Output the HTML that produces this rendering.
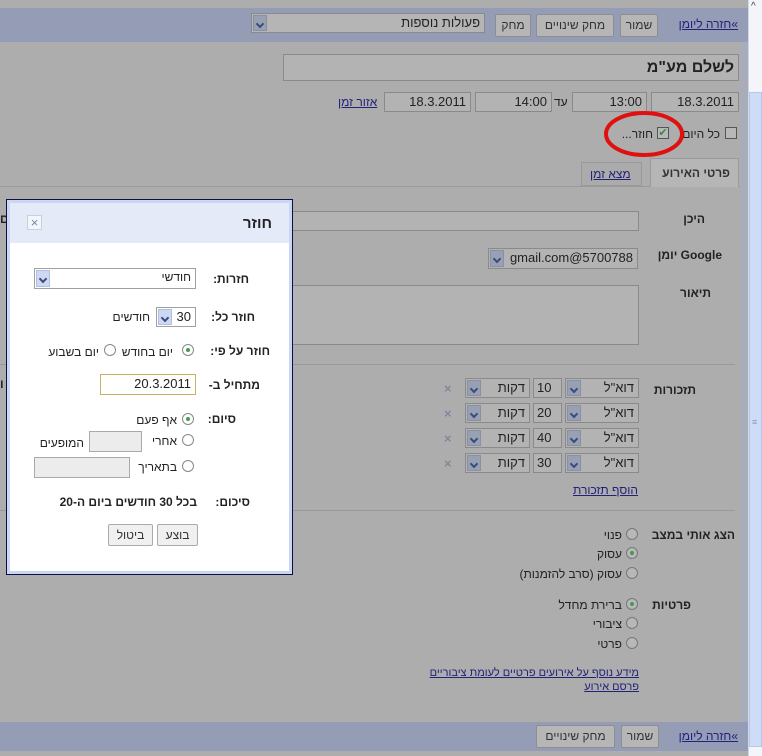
<!DOCTYPE html>
<html><head><meta charset="utf-8">
<style>
*{margin:0;padding:0;box-sizing:border-box}
body{width:762px;height:756px;background:#adadad;position:relative;overflow:hidden;font-family:"Liberation Sans","Noto Sans CJK SC",sans-serif;font-size:12px;color:#222}
.a{position:absolute}
.t{position:absolute;white-space:nowrap;direction:rtl;line-height:14px}
.b{font-weight:bold}
.lnk{color:#22227a;text-decoration:underline}
.btn{position:absolute;background:#b6b6b6;border:1px solid #8e8e8e;text-align:center;line-height:20px;color:#333;border-radius:2px}
.inp{position:absolute;background:#b3b3b3;border:1px solid #8a8a8a;text-align:right;padding-right:4px;color:#222;font-size:13px;line-height:17px}
.arr{position:absolute;background:#98a0b4;border:1px solid #8a90a4;width:14px}
.arr:after{content:"";position:absolute;left:3px;top:5px;width:4px;height:4px;border-right:2px solid #3a4a7a;border-bottom:2px solid #3a4a7a;transform:rotate(45deg)}
.rad{position:absolute;width:12px;height:12px;border-radius:50%;border:1px solid #777;background:#b8b8b8}
.rad.on:after{content:"";position:absolute;left:3px;top:3px;width:4px;height:4px;border-radius:50%;background:#4a9a4a}
.x{position:absolute;color:#8088a0;font-weight:bold;font-size:13px}
.d .rad{background:#fff;border-color:#888}
.d .inp{background:#fff;border-color:#a0a0a0}
.d .arr{background:#cdd9f3;border-color:#b0c0e0}
.d .btn{background:#f0f0f0;border-color:#aaa}
</style></head><body>
<div class="a" style="left:748px;top:0;width:14px;height:756px;background:#f3f5fb;border-left:1px solid #d0d8e8"></div>
<div class="a" style="left:749px;top:92px;width:13px;height:655px;background:#cfdcf7;border:1px solid #b6c7ea"></div>
<div class="t" style="left:751px;top:0;font-size:10px;color:#444">^</div>
<div class="t" style="left:752px;top:415px;font-size:9px;color:#8899bb">≡</div>
<div class="a" style="left:740px;top:42px;width:8px;height:680px;background:#a9adba"></div>

<div class="a" style="left:0;top:8px;width:748px;height:34px;background:#959cb5"></div>
<div class="t lnk" style="right:24px;top:17px">»חזרה ליומן</div>
<div class="btn" style="left:620px;top:14px;width:38px;height:23px">שמור</div>
<div class="btn" style="left:536px;top:14px;width:78px;height:23px">מחק שינויים</div>
<div class="btn" style="left:495px;top:14px;width:36px;height:23px">מחק</div>
<div class="inp" style="left:251px;top:13px;width:234px;height:20px;background:#b5b5b5">פעולות נוספות</div>
<div class="arr" style="left:253px;top:15px;height:16px"></div>

<div class="inp b" style="left:283px;top:54px;width:456px;height:27px;font-size:16px;line-height:25px">לשלם מע"מ</div>
<div class="inp" style="left:651px;top:92px;width:88px;height:20px">18.3.2011</div>
<div class="inp" style="left:572px;top:92px;width:75px;height:20px">13:00</div>
<div class="t" style="left:554px;top:95px">עד</div>
<div class="inp" style="left:475px;top:92px;width:77px;height:20px">14:00</div>
<div class="inp" style="left:384px;top:92px;width:87px;height:20px">18.3.2011</div>
<div class="t lnk" style="left:338px;top:95px">אזור זמן</div>

<div class="a" style="left:725px;top:127px;width:12px;height:12px;border:1px solid #555;background:#b8b8b8"></div>
<div class="t" style="right:42px;top:127px">כל היום</div>
<div class="a" style="left:657px;top:127px;width:12px;height:12px;border:1px solid #555;background:#b8b8b8;color:#3a8a3a;font-size:11px;line-height:10px;text-align:center">✔</div>
<div class="t" style="right:109px;top:127px">חוזר...</div>
<svg class="a" style="left:600px;top:110px" width="90" height="50"><ellipse cx="44" cy="24" rx="38" ry="21" fill="none" stroke="#e01010" stroke-width="4"/></svg>

<div class="a" style="left:0;top:186px;width:740px;height:1px;background:#9a9a9a"></div>
<div class="a" style="left:650px;top:158px;width:89px;height:29px;background:#b6b6b6;border:1px solid #9a9a9a;border-bottom:none"></div>
<div class="t b" style="right:32px;top:166px;color:#333">פרטי האירוע</div>
<div class="a" style="left:581px;top:162px;width:61px;height:24px;background:#ababab;border:1px solid #999"></div>
<div class="t lnk" style="left:590px;top:167px">מצא זמן</div>

<div class="t b" style="right:57px;top:212px">היכן</div>
<div class="t b" style="left:0;top:212px">ם</div>
<div class="inp" style="left:290px;top:211px;width:349px;height:20px"></div>
<div class="t b" style="right:40px;top:248px">Google יומן</div>
<div class="inp" style="left:488px;top:248px;width:150px;height:21px">gmail.com@5700788</div>
<div class="arr" style="left:490px;top:250px;height:17px"></div>
<div class="t b" style="right:51px;top:286px">תיאור</div>
<div class="inp" style="left:290px;top:285px;width:349px;height:60px"></div>
<div class="a" style="left:0;top:364px;width:735px;height:1px;background:#999"></div>

<div class="t b" style="right:66px;top:383px">תזכורות</div>
<div class="t b" style="left:0;top:377px">ו</div>
<div class="inp" style="left:565px;top:378px;width:74px;height:20px">דוא"ל</div><div class="arr" style="left:567px;top:380px;height:16px"></div>
<div class="inp" style="left:533px;top:378px;width:29px;height:20px;text-align:left;padding-left:3px">10</div>
<div class="inp" style="left:465px;top:378px;width:65px;height:20px">דקות</div><div class="arr" style="left:467px;top:380px;height:16px"></div>
<div class="x" style="left:444px;top:381px">×</div>
<div class="inp" style="left:565px;top:403px;width:74px;height:20px">דוא"ל</div><div class="arr" style="left:567px;top:405px;height:16px"></div>
<div class="inp" style="left:533px;top:403px;width:29px;height:20px;text-align:left;padding-left:3px">20</div>
<div class="inp" style="left:465px;top:403px;width:65px;height:20px">דקות</div><div class="arr" style="left:467px;top:405px;height:16px"></div>
<div class="x" style="left:444px;top:406px">×</div>
<div class="inp" style="left:565px;top:428px;width:74px;height:20px">דוא"ל</div><div class="arr" style="left:567px;top:430px;height:16px"></div>
<div class="inp" style="left:533px;top:428px;width:29px;height:20px;text-align:left;padding-left:3px">40</div>
<div class="inp" style="left:465px;top:428px;width:65px;height:20px">דקות</div><div class="arr" style="left:467px;top:430px;height:16px"></div>
<div class="x" style="left:444px;top:431px">×</div>
<div class="inp" style="left:565px;top:453px;width:74px;height:20px">דוא"ל</div><div class="arr" style="left:567px;top:455px;height:16px"></div>
<div class="inp" style="left:533px;top:453px;width:29px;height:20px;text-align:left;padding-left:3px">30</div>
<div class="inp" style="left:465px;top:453px;width:65px;height:20px">דקות</div><div class="arr" style="left:467px;top:455px;height:16px"></div>
<div class="x" style="left:444px;top:456px">×</div>
<div class="t lnk" style="right:124px;top:483px">הוסף תזכורת</div>
<div class="a" style="left:0;top:510px;width:735px;height:1px;background:#999"></div>

<div class="t b" style="right:27px;top:528px">הצג אותי במצב</div>
<div class="rad" style="left:626px;top:528px"></div><div class="t" style="right:140px;top:528px">פנוי</div>
<div class="rad on" style="left:626px;top:547px"></div><div class="t" style="right:140px;top:547px">עסוק</div>
<div class="rad" style="left:626px;top:567px"></div><div class="t" style="right:140px;top:567px">עסוק (סרב להזמנות)</div>
<div class="t b" style="right:71px;top:598px">פרטיות</div>
<div class="rad on" style="left:626px;top:598px"></div><div class="t" style="right:140px;top:598px">ברירת מחדל</div>
<div class="rad" style="left:626px;top:617px"></div><div class="t" style="right:140px;top:617px">ציבורי</div>
<div class="rad" style="left:626px;top:637px"></div><div class="t" style="right:140px;top:637px">פרטי</div>
<div class="t lnk" style="right:123px;top:666px;font-size:11px">מידע נוסף על אירועים פרטיים לעומת ציבוריים</div>
<div class="t lnk" style="right:123px;top:680px;font-size:11px">פרסם אירוע</div>

<div class="a" style="left:0;top:722px;width:748px;height:29px;background:#959cb5"></div>
<div class="t lnk" style="right:24px;top:729px">»חזרה ליומן</div>
<div class="btn" style="left:621px;top:725px;width:38px;height:23px">שמור</div>
<div class="btn" style="left:536px;top:725px;width:79px;height:23px">מחק שינויים</div>

<div class="a d" style="left:6px;top:199px;width:287px;height:376px;border:1px solid #101040;background:#c9d7f3">
 <div class="a" style="left:3px;top:3px;width:279px;height:368px;background:#fff"></div>
 <div class="a" style="left:3px;top:3px;width:279px;height:40px;background:#e4eaf8"></div>
 <div class="t b" style="right:20px;top:15px;font-size:15px;line-height:18px">חוזר</div>
 <div class="a" style="left:20px;top:15px;width:15px;height:15px;border:1px solid #c8d0e0;background:#f4f6fb;color:#7a8aa8;font-size:13px;line-height:13px;text-align:center">×</div>

 <div class="t b" style="right:43px;top:72px">חזרות:</div>
 <div class="inp" style="left:27px;top:68px;width:162px;height:21px;font-size:12px">חודשי</div>
 <div class="arr" style="left:29px;top:70px;height:17px"></div>

 <div class="t b" style="right:37px;top:110px">חוזר כל:</div>
 <div class="inp" style="left:149px;top:107px;width:40px;height:20px;font-size:13px">30</div>
 <div class="arr" style="left:151px;top:109px;height:16px"></div>
 <div class="t" style="right:142px;top:110px">חודשים</div>

 <div class="t b" style="right:22px;top:144px">חוזר על פי:</div>
 <div class="rad on" style="left:175px;top:144px"></div>
 <div class="t" style="right:119px;top:145px">יום בחודש</div>
 <div class="rad" style="left:97px;top:144px"></div>
 <div class="t" style="right:193px;top:145px">יום בשבוע</div>

 <div class="t b" style="right:32px;top:178px">מתחיל ב-</div>
 <div class="inp" style="left:93px;top:174px;width:96px;height:21px;border-color:#c8b060;font-size:13px">20.3.2011</div>

 <div class="t b" style="right:56px;top:212px">סיום:</div>
 <div class="rad on" style="left:175px;top:213px"></div><div class="t" style="right:115px;top:213px">אף פעם</div>
 <div class="rad" style="left:175px;top:234px"></div><div class="t" style="right:115px;top:234px">אחרי</div>
 <div class="inp" style="left:82px;top:231px;width:53px;height:21px;background:#ececec;border-color:#aaa"></div>
 <div class="t" style="right:208px;top:236px">המופעים</div>
 <div class="rad" style="left:175px;top:260px"></div><div class="t" style="right:115px;top:260px">בתאריך</div>
 <div class="inp" style="left:27px;top:257px;width:96px;height:21px;background:#ececec;border-color:#aaa"></div>

 <div class="t b" style="right:42px;top:295px">סיכום:</div>
 <div class="t b" style="right:95px;top:295px">בכל 30 חודשים ביום ה-20</div>

 <div class="btn" style="left:150px;top:324px;width:41px;height:22px">בוצע</div>
 <div class="btn" style="left:101px;top:324px;width:45px;height:22px">ביטול</div>
</div>
</body></html>
